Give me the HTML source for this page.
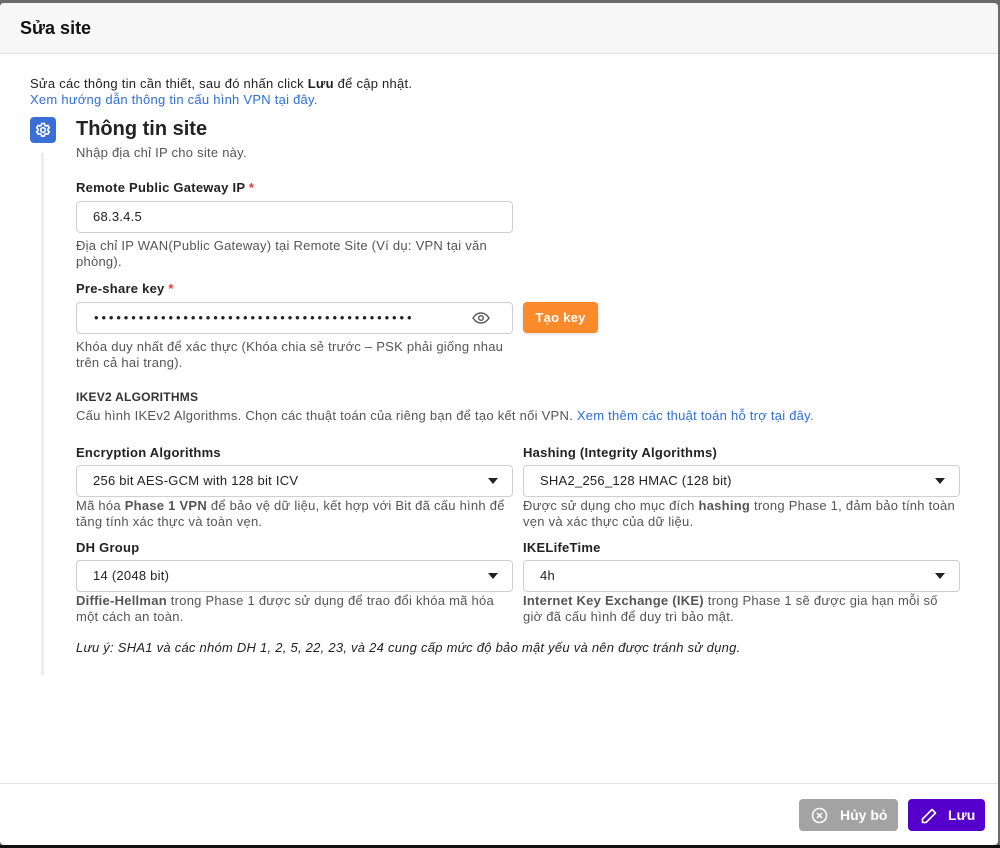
<!DOCTYPE html>
<html><head><meta charset="utf-8"><style>
*{box-sizing:border-box;margin:0;padding:0}
body{width:1000px;height:848px;background:#6b6b6b;font-family:"Liberation Sans",sans-serif;color:#222;position:relative;overflow:hidden;font-size:13px;letter-spacing:0.25px}
.m{position:absolute;left:0;top:3px;width:998px;height:842px;background:#fff;border-radius:4px;overflow:hidden}
.a{position:absolute;white-space:nowrap}
.hd{position:absolute;left:0;top:0;width:100%;height:51px;background:#f7f7f7;border-bottom:1px solid #e2e2e2}
.lbl{font-weight:bold;font-size:13px;color:#222}
.req{color:#e53935}
.help{color:#555;font-size:13px;line-height:16px;white-space:normal}
.in{position:absolute;border:1px solid #cfcfcf;border-radius:4px;background:#fff;height:32px;padding-left:16px;line-height:30px;font-size:13px;color:#222}
.caret{position:absolute;right:14px;top:12px;width:0;height:0;border-left:5px solid transparent;border-right:5px solid transparent;border-top:6px solid #222}
.link{color:#2f6fd8}
</style></head><body>
<div class="m">
<div class="hd"><div class="a" style="left:20px;top:15px;font-size:18px;font-weight:bold;color:#111;letter-spacing:0">Sửa site</div></div>
<div class="a" style="left:30px;top:73px">Sửa các thông tin cần thiết, sau đó nhấn click <b>Lưu</b> để cập nhật.</div>
<div class="a link" style="left:30px;top:89px">Xem hướng dẫn thông tin cấu hình VPN tại đây.</div>
<div style="position:absolute;left:30px;top:114px;width:26px;height:26px;background:#3b6fd6;border-radius:4px">
<svg width="26" height="26" viewBox="0 0 26 26"><g fill="none" stroke="#fff" stroke-width="1.6"><circle cx="13" cy="13" r="2.3"/><path d="M11.6 6.5h2.8l.4 1.8 1.3.7 1.8-.6 1.4 2.4-1.4 1.3v1.4l1.4 1.3-1.4 2.4-1.8-.6-1.3.7-.4 1.8h-2.8l-.4-1.8-1.3-.7-1.8.6-1.4-2.4 1.4-1.3v-1.4L6.7 10.8l1.4-2.4 1.8.6 1.3-.7z"/></g></svg></div>
<div style="position:absolute;left:41px;top:150px;width:3px;height:522px;background:#ececec"></div>
<div class="a" style="left:76px;top:115px;font-size:20px;font-weight:bold;color:#222;letter-spacing:0">Thông tin site</div>
<div class="a" style="left:76px;top:142px;color:#555">Nhập địa chỉ IP cho site này.</div>
<div class="a lbl" style="left:76px;top:177px">Remote Public Gateway IP <span class="req">*</span></div>
<div class="in" style="left:76px;top:198px;width:437px">68.3.4.5</div>
<div class="a help" style="left:76px;top:235px;width:430px">Địa chỉ IP WAN(Public Gateway) tại Remote Site (Ví dụ: VPN tại văn phòng).</div>
<div class="a lbl" style="left:76px;top:278px">Pre-share key <span class="req">*</span></div>
<div class="in" style="left:76px;top:299px;width:437px;letter-spacing:2.9px;font-size:13px;padding-left:17px">•••••••••••••••••••••••••••••••••••••••••••
<svg style="position:absolute;right:22px;top:9px" width="18" height="12" viewBox="0 0 18 12"><path d="M1 6C3.5 2 6 1 9 1s5.5 1 8 5c-2.5 4-5 5-8 5S3.5 10 1 6z" fill="none" stroke="#555" stroke-width="1.4"/><circle cx="9" cy="6" r="2.3" fill="none" stroke="#555" stroke-width="1.4"/></svg></div>
<div style="position:absolute;left:523px;top:299px;width:75px;height:31px;background:#fb8a2a;border-radius:4px;color:#fff;font-weight:bold;text-align:center;line-height:31px;font-size:13px;box-shadow:0 1px 3px rgba(0,0,0,.15)">Tạo key</div>
<div class="a help" style="left:76px;top:336px;width:445px">Khóa duy nhất để xác thực (Khóa chia sẻ trước – PSK phải giống nhau trên cả hai trang).</div>
<div class="a" style="left:76px;top:387px;font-weight:bold;font-size:12px;color:#333">IKEV2 ALGORITHMS</div>
<div class="a" style="left:76px;top:405px;color:#555">Cấu hình IKEv2 Algorithms. Chọn các thuật toán của riêng bạn để tạo kết nối VPN. <span class="link">Xem thêm các thuật toán hỗ trợ tại đây.</span></div>

<div class="a lbl" style="left:76px;top:442px">Encryption Algorithms</div>
<div class="in" style="left:76px;top:462px;width:437px">256 bit AES-GCM with 128 bit ICV<span class="caret"></span></div>
<div class="a help" style="left:76px;top:495px;width:437px">Mã hóa <b>Phase 1 VPN</b> để bảo vệ dữ liệu, kết hợp với Bit đã cấu hình để tăng tính xác thực và toàn vẹn.</div>
<div class="a lbl" style="left:523px;top:442px">Hashing (Integrity Algorithms)</div>
<div class="in" style="left:523px;top:462px;width:437px">SHA2_256_128 HMAC (128 bit)<span class="caret"></span></div>
<div class="a help" style="left:523px;top:495px;width:437px">Được sử dụng cho mục đích <b>hashing</b> trong Phase 1, đảm bảo tính toàn vẹn và xác thực của dữ liệu.</div>

<div class="a lbl" style="left:76px;top:537px">DH Group</div>
<div class="in" style="left:76px;top:557px;width:437px">14 (2048 bit)<span class="caret"></span></div>
<div class="a help" style="left:76px;top:590px;width:437px"><b>Diffie-Hellman</b> trong Phase 1 được sử dụng để trao đổi khóa mã hóa một cách an toàn.</div>
<div class="a lbl" style="left:523px;top:537px">IKELifeTime</div>
<div class="in" style="left:523px;top:557px;width:437px">4h<span class="caret"></span></div>
<div class="a help" style="left:523px;top:590px;width:437px"><b>Internet Key Exchange (IKE)</b> trong Phase 1 sẽ được gia hạn mỗi số giờ đã cấu hình để duy trì bảo mật.</div>
<div class="a" style="left:76px;top:637px;font-style:italic;color:#222">Lưu ý: SHA1 và các nhóm DH 1, 2, 5, 22, 23, và 24 cung cấp mức độ bảo mật yếu và nên được tránh sử dụng.</div>

<div style="position:absolute;left:0;top:780px;width:100%;height:1px;background:#e2e2e2"></div>
<div style="position:absolute;left:799px;top:796px;width:99px;height:32px;background:#a3a3a3;border-radius:4px;color:#fff;font-weight:bold;font-size:14px;line-height:32px;padding-left:41px;letter-spacing:0">Hủy bỏ
<svg style="position:absolute;left:12px;top:8px" width="17" height="17" viewBox="0 0 17 17"><circle cx="8.5" cy="8.5" r="7" fill="none" stroke="#fff" stroke-width="1.5"/><path d="M6 6l5 5M11 6l-5 5" stroke="#fff" stroke-width="1.5"/></svg></div>
<div style="position:absolute;left:908px;top:796px;width:77px;height:32px;background:#5500cc;border-radius:4px;color:#fff;font-weight:bold;font-size:14px;line-height:32px;padding-left:40px;letter-spacing:0">Lưu
<svg style="position:absolute;left:12px;top:8px" width="18" height="18" viewBox="0 0 18 18"><path d="M12 2.5l3.5 3.5L6 15.5H2.5V12z" fill="none" stroke="#fff" stroke-width="1.6" stroke-linejoin="round"/></svg></div>
</div>
<div style="position:absolute;left:0;top:845px;width:1000px;height:3px;background:#111"></div>
</body></html>
